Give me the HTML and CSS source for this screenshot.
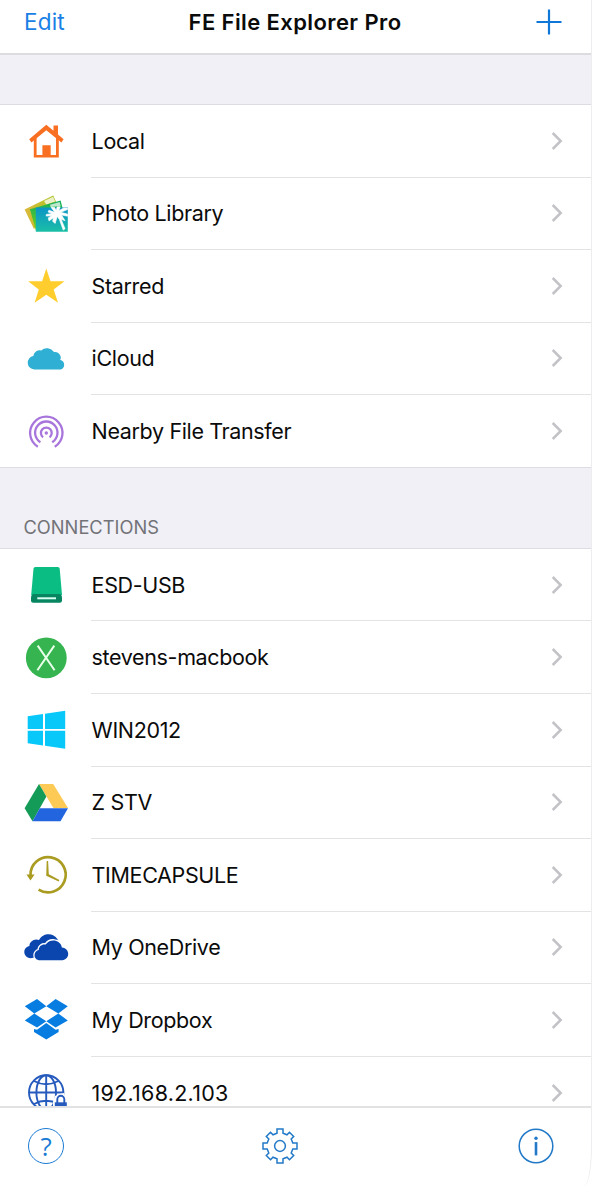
FILE: index.html
```html
<!DOCTYPE html>
<html lang="en">
<head>
<meta charset="utf-8">
<title>FE File Explorer Pro</title>
<link rel="stylesheet" href="styles.css">
</head>
<body>
<svg class="defs" width="0" height="0" aria-hidden="true">
  <defs>
    <linearGradient id="photo-front" x1="0" y1="0" x2="0" y2="1"><stop offset="0" stop-color="#0b94c6"/><stop offset="1" stop-color="#1bbfa6"/></linearGradient>
    <linearGradient id="photo-mid" x1="0" y1="0" x2="0" y2="1"><stop offset="0" stop-color="#0fae62"/><stop offset="1" stop-color="#7bd20e"/></linearGradient>
    <linearGradient id="photo-back" x1="0" y1="0" x2="1" y2="0"><stop offset="0" stop-color="#dcb93c"/><stop offset="1" stop-color="#a5c51d"/></linearGradient>
    <symbol id="chevron" viewBox="0 0 14 20"><path d="M2.7 2l8 8-8 8" fill="none" stroke="#c3c3c7" stroke-width="2.5"/></symbol>
  </defs>
</svg>
<div class="app">
  <header class="navbar">
    <a class="edit">Edit</a>
    <h1 class="title">FE File Explorer Pro</h1>
    <svg class="plus" viewBox="0 0 26 26"><path d="M13 .5v25M.5 13h25" stroke="#0f77d8" stroke-width="2.200"/></svg>
  </header>
  <main class="content">
    <div class="spacer"></div>
    <ul class="list">
      <li class="row">
        <svg class="icon" viewBox="0 0 48 48"><g fill="#f96f22"><path d="M24.3 7.8L31.500 13.800V8.6h4.500v9l5.6 4.6-2.2 3.400L24.3 13.200 9.4 25.600 7.2 22.2z"/><path d="M11.8 22.5l2.8-2V38h5.800v-9.8h8.3V38H34V20.5l2.800 2v18H11.8z"/></g></svg>
        <div class="cell"><span class="label">Local</span><svg class="chevron"><use href="#chevron"/></svg></div>
      </li>
      <li class="row">
        <svg class="icon" viewBox="0 0 48 48">
          <path d="M2.6 19.5L31.2 5.4l5 11L12 39z" fill="url(#photo-back)"/><path d="M22 11l9-4.2 2.3 4.7-9 3z" fill="#fff" opacity=".75"/>
          <path d="M8 19.2L38.6 10.6l3 12L14 41z" fill="url(#photo-mid)"/><path d="M28 14.7l9.6-2.7 1 4-10 1z" fill="#fff" opacity=".7"/>
          <path d="M13.8 17.6h32v24.2h-32z" fill="url(#photo-front)"/>
          <path d="M32.8 22.3l-3.8-5h3.4l1.8 3 1-3.5h3l-1.4 4 4.8-2.8h3.9v1.6l-6.8 2.7 6.8 1.7v2.2l-6-1.2 3.6 5.8-4-1.6 4 9.6-1.9 1.3-3.8-10.5-2.2-3.2-2 7-2.6-2.1.9-3.6-4.5 3.2-.8-3 3.5-2.1-5.6.3.2-1.7 5.8-.9-4-1.5.8-1.8z" fill="#fff" stroke="#fff" stroke-width=".6"/>
        </svg>
        <div class="cell"><span class="label">Photo Library</span><svg class="chevron"><use href="#chevron"/></svg></div>
      </li>
      <li class="row">
        <svg class="icon" viewBox="0 0 48 48"><path d="M24.3 6.5l4.2 12.7h14L31.7 27.4l4.3 13.4-11.7-8.1-11.7 8.1 4.2-13.4L6.1 19.2h14z" fill="#ffce2e"/></svg>
        <div class="cell"><span class="label">Starred</span><svg class="chevron"><use href="#chevron"/></svg></div>
      </li>
      <li class="row">
        <svg class="icon" viewBox="0 0 48 48"><path d="M12.2 34.4a6.7 6.7 0 0 1-.9-13.3 6.4 6.4 0 0 1 7.9-5.6 8.5 8.5 0 0 1 12.8 1.6 5.7 5.7 0 0 1 6.2 8 4.8 4.8 0 0 1 .6 9.3z" fill="#2eafd3"/></svg>
        <div class="cell"><span class="label">iCloud</span><svg class="chevron"><use href="#chevron"/></svg></div>
      </li>
      <li class="row">
        <svg class="icon" viewBox="0 0 48 48"><g fill="none" stroke="#a875dc" stroke-width="2.3"><path d="M15.8 38.7a16.2 16.2 0 1 1 17 0"/><path d="M18.4 34.2a11.2 11.2 0 1 1 11.8 0"/><path d="M21.1 29.3a5.4 5.4 0 1 1 6.4 0"/></g><circle cx="24.3" cy="25" r="1.7" fill="#a875dc"/></svg>
        <div class="cell"><span class="label">Nearby File Transfer</span><svg class="chevron"><use href="#chevron"/></svg></div>
      </li>
    </ul>
    <h2 class="section">CONNECTIONS</h2>
    <ul class="list">
      <li class="row">
        <svg class="icon" viewBox="0 0 48 48"><path d="M13.4 6h22.4q1.7 0 1.9 1.7L40 34H9.2l2.3-26.3Q11.700 6 13.4 6z" fill="#0abd83"/><path d="M9 37q0-4 3-4h25q3 0 3 4v2.500q0 2.200-2.200 2.200H11.200q-2.200 0-2.200-2.200z" fill="#078560"/><path d="M15.300 37.300H34" stroke="#d8fff2" stroke-width="2"/></svg>
        <div class="cell"><span class="label">ESD-USB</span><svg class="chevron"><use href="#chevron"/></svg></div>
      </li>
      <li class="row">
        <svg class="icon" viewBox="0 0 48 48"><circle cx="24.300" cy="23.900" r="20.400" fill="#35b44f"/><path d="M15.700 11.600l16.900 24.600M32.300 11.600L15.400 36.200" stroke="#e9ffe9" stroke-width="2"/></svg>
        <div class="cell"><span class="label">stevens-macbook</span><svg class="chevron"><use href="#chevron"/></svg></div>
      </li>
      <li class="row">
        <svg class="icon" viewBox="0 0 48 48"><path d="M5.700 10.300l15.300-2.300v14.900H5.700zM23 7.700l20.200-2.900v18.100H23zM5.700 24.800H21v14.700L5.700 37.300zM23 24.800h20.200v18L23 39.800z" fill="#08c8fa"/></svg>
        <div class="cell"><span class="label">WIN2012</span><svg class="chevron"><use href="#chevron"/></svg></div>
      </li>
      <li class="row">
        <svg class="icon" viewBox="0 0 48 48"><path d="M17 5h14.200L46 29H31.400z" fill="#fdca55"/><path d="M17 5l7.400 12.500L10.500 42.200 2.600 29.300z" fill="#149b58"/><path d="M17.800 29.200H46l-7.500 13h-28z" fill="#2364df"/></svg>
        <div class="cell"><span class="label">Z STV</span><svg class="chevron"><use href="#chevron"/></svg></div>
      </li>
      <li class="row">
        <svg class="icon" viewBox="0 0 48 48"><path d="M8.500 24.500A17.600 17.600 0 1 1 16.600 38.600" fill="none" stroke="#aa9c21" stroke-width="2.700"/><path d="M4.400 23.600h8.200l-4.100 5.800z" fill="#aa9c21"/><path d="M24.700 10h1.400l.7 13.300 10.600 5.800-.7 1.300-12.500-5.700z" fill="#aa9c21"/></svg>
        <div class="cell"><span class="label">TIMECAPSULE</span><svg class="chevron"><use href="#chevron"/></svg></div>
      </li>
      <li class="row">
        <svg class="icon" viewBox="0 0 48 48"><path d="M8.500 34.300C4.700 33.700 2.300 31.200 2.300 28c0-3.200 2.400-5.600 5.200-6-.3-4.300 5-8 9.500-6 3.700-7 14-8 18.500-.8q1 1.600 1.200 3.200L32 30z" fill="#0a46ad"/><path d="M18 36.200c-3.400 0-5.500-2.200-5.500-5 0-2.700 2-4.800 4.300-5.200-.3-3.700 3.600-6.400 6.900-5.400 3.200-6 14.500-6 16.200 2.800 3.300 0 6.600 3 6.300 6.800-.2 3.200-2.600 5.600-5.700 6z" fill="#0a46ad" stroke="#fff" stroke-width="2.600" paint-order="stroke"/></svg>
        <div class="cell"><span class="label">My OneDrive</span><svg class="chevron"><use href="#chevron"/></svg></div>
      </li>
      <li class="row">
        <svg class="icon" viewBox="0 0 48 48"><path d="M15 3l9.300 7.200-12 7.300-9.500-7.200zM33.600 3l-9.300 7.200 12 7.300 9.500-7.200zM2.800 24.500l9.500-7 12 7.800-9.300 6.300zM45.800 24.500l-9.500-7-12 7.800 9.300 6.300zM12 33l3 .8 9.300-6.900 9.300 6.900 3-.8v2.900l-12.300 7.700L12 35.900z" fill="#087de1"/></svg>
        <div class="cell"><span class="label">My Dropbox</span><svg class="chevron"><use href="#chevron"/></svg></div>
      </li>
      <li class="row">
        <svg class="icon" viewBox="0 0 48 48"><g fill="none" stroke="#265bbd" stroke-width="1.900"><circle cx="24.200" cy="23.500" r="17.200"/><ellipse cx="24.200" cy="23.500" rx="9.800" ry="17.200"/><path d="M24.200 6.300v34.400M7 23.500h34.400M12 12q12 6.500 24.400 0M12 35q12-6.500 24.400 0"/></g><path d="M31 32.500l2-5.500q5-3 9-3v20H31z" fill="#fff"/><path d="M32.800 33.300h12V44h-12z" fill="#265bbd"/><path d="M35.300 34V30.300a3.500 3.500 0 0 1 7 0v3.700" fill="none" stroke="#265bbd" stroke-width="1.900"/></svg>
        <div class="cell"><span class="label numeric">192.168.2.103</span><svg class="chevron"><use href="#chevron"/></svg></div>
      </li>
    </ul>
  </main>
  <footer class="toolbar">
    <div class="tool help">?</div>
    <svg class="gear" viewBox="-18 -18 36 36"><g fill="none" stroke="#2179c8" stroke-width="1.500"><path d="M-3-12.800V-17H3v4.200L7-11.200l2.500-2.500 4.200 4.200L11.200-7l1.600 4H17V3H12.800L11.200 7l2.500 2.500-4.200 4.200L7 11.200 3 12.800V17H-3V12.800L-7 11.200l-2.500 2.500-4.200-4.200L-11.200 7-12.800 3H-17V-3h4.200l1.600-4-2.500-2.500 4.200-4.200 2.500 2.500z"/><circle r="5.400"/></g></svg>
    <svg class="info" viewBox="-18 -18 36 36"><circle r="16.800" fill="none" stroke="#2179c8" stroke-width="1.500"/><circle cy="-7.800" r="1.700" fill="#2179c8"/><path d="M0-3.900V9.400" stroke="#2179c8" stroke-width="2.600"/></svg>
  </footer>
  <div class="screen-edge"></div>
</div>
</body>
</html>
```
FILE: styles.css
```css
* { box-sizing: border-box; }
body { margin: 0; font-family: Inter, "Liberation Sans", sans-serif; color: #0b0b0b; background: #fff; }
.defs { display: block; position: absolute; }
.app { position: relative; width: 592px; height: 1186px; display: flex; flex-direction: column; overflow: hidden; }
.navbar { flex: none; height: 55px; padding: 0 30px 10px 24px; display: grid; grid-template-columns: 1fr auto 1fr; align-items: center; border-bottom: 2px solid #dcdce0; }
.edit { color: #1a80e6; font-size: 22.5px; letter-spacing: 0.2px; }
.title { margin: 0 -4px 0 0; font-size: 22px; font-weight: 600; letter-spacing: 0.4px; white-space: nowrap; }
.plus { width: 26px; height: 26px; justify-self: end; }
.content { flex: 1; min-height: 0; overflow: hidden; background: #f0f0f6; }
.spacer { height: 49px; }
.list { list-style: none; margin: 0; padding: 0; background: #fff; border-top: 1px solid #dddde1; }
.row { height: 72.57px; display: flex; align-items: center; padding-left: 22px; }
.icon { flex: none; width: 48px; height: 48px; margin-right: 21px; }
.cell { flex: 1; height: 100%; display: flex; align-items: center; justify-content: space-between; padding-right: 28px; border-bottom: 1px solid #e3e3e6; }
.row:last-child .cell { border-bottom-color: transparent; }
.label { padding-left: 0.6px; font-size: 21.5px; letter-spacing: -0.36px; white-space: nowrap; }
.numeric { letter-spacing: 0.25px; }
.chevron { width: 14px; height: 20px; }
.section { position: relative; margin: -1px 0 0; height: 81px; padding: 48px 23.5px 0; font-size: 18.3px; line-height: 22px; font-weight: 400; color: #737378; background: #f0f0f6; border-top: 1px solid #dddde1; }
.toolbar { flex: none; height: 80px; padding: 0 38px 2px 28px; display: flex; align-items: center; justify-content: space-between; border-top: 2px solid #e2e2e5; background: #fff; }
.tool { width: 36px; height: 36px; border: 1.5px solid #1a7bd4; border-radius: 50%; color: #1a7bd4; display: flex; align-items: center; justify-content: center; }
.help { font-family: "Open Sans", sans-serif; font-size: 26px; font-weight: 500; line-height: 1; }
.gear, .info { width: 36px; height: 36px; }
.gear { margin-right: 23px; }
.screen-edge { position: absolute; inset: 0; border-right: 1px solid #ededf0; border-bottom-right-radius: 8px 40px; }
```
